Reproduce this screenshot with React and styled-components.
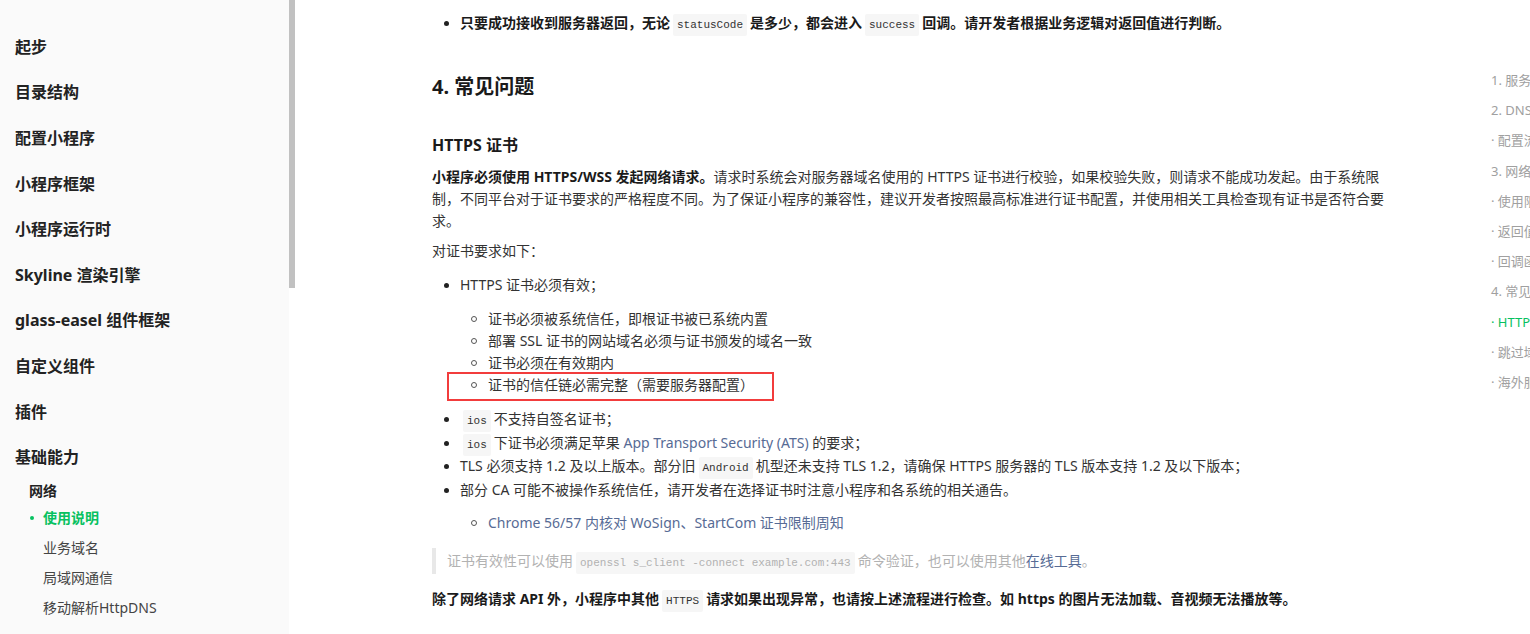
import styled, { createGlobalStyle } from "styled-components";

const GlobalStyle = createGlobalStyle`
    html, body {
        margin: 0;
        padding: 0;
        background: #fff;
        overflow: hidden;
    }
    body {
        font-family: "Noto Sans", "Noto Sans CJK SC", sans-serif;
        color: #333;
        -webkit-font-smoothing: antialiased;
    }
`;

const Page = styled.div`
    display: flex;
    width: 1530px;
    height: 634px;
    overflow: hidden;
`;

/* 左侧目录 */
const Sidebar = styled.nav`
    width: 289px;
    flex-shrink: 0;
    background: #fafafa;
    padding: 24px 0 0 15px;
    box-sizing: border-box;
`;

const ScrollTrack = styled.div`
    width: 6px;
    flex-shrink: 0;
    background: #fff;
`;

const ScrollThumb = styled.div`
    height: 288px;
    background: #c1c1c1;
`;

const NavItem = styled.div`
    font-size: 16px;
    font-weight: 700;
    line-height: 22px;
    padding: 11.8px 0;
    color: #222;
`;

const NavGroup = styled.div`
    font-size: 14px;
    font-weight: 700;
    line-height: 20px;
    margin-top: 1px;
    margin-bottom: 2px;
    padding-left: 14px;
    color: #222;
`;

const NavSub = styled.div`
    position: relative;
    font-size: 14px;
    line-height: 30px;
    padding-left: 28px;
    color: ${(p) => (p.$active ? "#07c160" : "#444")};
    font-weight: ${(p) => (p.$active ? 700 : 400)};

    &::before {
        content: "";
        display: ${(p) => (p.$active ? "block" : "none")};
        position: absolute;
        left: 15px;
        top: 13px;
        width: 4px;
        height: 4px;
        border-radius: 50%;
        background: #07c160;
    }
`;

/* 正文 */
const Main = styled.main`
    flex-shrink: 0;
    padding: 12px 0 0 137px;
`;

const Article = styled.article`
    width: 962px;
    font-size: 14px;
    line-height: 22px;
    color: #333;
`;

const List = styled.ul`
    list-style: none;
    margin: ${(p) => p.$m || "0"};
    padding: 0;
`;

const Item = styled.li`
    position: relative;
    padding-left: 28px;
    margin-top: ${(p) => p.$mt || "0"};
    font-weight: ${(p) => (p.$bold ? 700 : 400)};
    color: ${(p) => (p.$bold ? "#1a1a1a" : "#333")};

    &::before {
        content: "";
        position: absolute;
        left: 12px;
        top: 9px;
        width: 5px;
        height: 5px;
        border-radius: 50%;
        background: #222;
    }
`;

const SubItem = styled.li`
    position: relative;
    padding-left: 28px;

    &::before {
        content: "";
        position: absolute;
        left: 11px;
        top: 8px;
        width: 4px;
        height: 4px;
        border-radius: 50%;
        border: 1.5px solid #555;
    }

    /* 截图里的红色标注框 */
    &::after {
        content: "";
        display: ${(p) => (p.$marked ? "block" : "none")};
        position: absolute;
        left: -13px;
        top: -2px;
        width: 327px;
        height: 29px;
        border: 2px solid #f23c3c;
        box-sizing: border-box;
    }
`;

const Code = styled.code`
    font-family: "Liberation Mono", "DejaVu Sans Mono", monospace;
    font-size: 11px;
    line-height: 14px;
    font-weight: 400;
    background: #f6f6f6;
    padding: 5px 4px;
    margin: 0 3px;
    border-radius: 2px;
    color: ${(p) => (p.$muted ? "#b2b2b2" : "#333")};
`;

const Link = styled.a`
    color: #576b95;
    text-decoration: none;
`;

const H2 = styled.h2`
    margin: 39px 0 0;
    font-size: 20px;
    line-height: 28px;
    font-weight: 700;
    color: #1a1a1a;
`;

const H3 = styled.h3`
    margin: 32px 0 0;
    font-size: 16px;
    line-height: 24px;
    font-weight: 700;
    color: #1a1a1a;
`;

const P = styled.p`
    margin: ${(p) => p.$mt || "0"} 0 0;
    font-weight: ${(p) => (p.$bold ? 700 : 400)};
    color: ${(p) => (p.$bold ? "#1a1a1a" : "#333")};

    strong {
        color: #1a1a1a;
    }
`;

const Quote = styled.blockquote`
    margin: 14px 0 0;
    padding: 2px 0 2px 11px;
    border-left: 4px solid #e8e8e8;
    color: #b2b2b2;
`;

/* 右侧页内导航 */
const Toc = styled.aside`
    flex-shrink: 0;
    margin-left: 97px;
    padding-top: 70px;
    font-size: 13px;
    white-space: nowrap;
`;

const TocItem = styled.div`
    line-height: 20px;
    margin-bottom: 10.2px;
    color: ${(p) => (p.$active ? "#07c160" : "#a0a0a0")};
`;

const navItems = [
    "起步",
    "目录结构",
    "配置小程序",
    "小程序框架",
    "小程序运行时",
    "Skyline 渲染引擎",
    "glass-easel 组件框架",
    "自定义组件",
    "插件",
    "基础能力",
];

const subItems = ["使用说明", "业务域名", "局域网通信", "移动解析HttpDNS"];

const tocItems = [
    "1. 服务器域名配置",
    "2. DNS 预解析域名",
    "· 配置流程",
    "3. 网络请求",
    "· 使用限制",
    "· 返回值",
    "· 回调函数",
    "4. 常见问题",
    "· HTTPS 证书",
    "· 跳过域名校验",
    "· 海外服务器",
];

const certRules = [
    "证书必须被系统信任，即根证书被已系统内置",
    "部署 SSL 证书的网站域名必须与证书颁发的域名一致",
    "证书必须在有效期内",
    "证书的信任链必需完整（需要服务器配置）",
];

const App = () => {
    return (
        <>
            <GlobalStyle />
            <Page>
                <Sidebar>
                    {navItems.map((t) => (
                        <NavItem key={t}>{t}</NavItem>
                    ))}
                    <NavGroup>网络</NavGroup>
                    {subItems.map((t, i) => (
                        <NavSub key={t} $active={i === 0}>
                            {t}
                        </NavSub>
                    ))}
                </Sidebar>
                <ScrollTrack>
                    <ScrollThumb />
                </ScrollTrack>

                <Main>
                    <Article>
                        <List>
                            <Item $bold>
                                只要成功接收到服务器返回，无论<Code>statusCode</Code>是多少，都会进入<Code>success</Code>回调。请开发者根据业务逻辑对返回值进行判断。
                            </Item>
                        </List>

                        <H2>4. 常见问题</H2>
                        <H3>HTTPS 证书</H3>

                        <P $mt="9px">
                            <strong>小程序必须使用 HTTPS/WSS 发起网络请求。</strong>
                            请求时系统会对服务器域名使用的 HTTPS 证书进行校验，如果校验失败，则请求不能成功发起。由于系统限制，不同平台对于证书要求的严格程度不同。为了保证小程序的兼容性，建议开发者按照最高标准进行证书配置，并使用相关工具检查现有证书是否符合要求。
                        </P>
                        <P $mt="8px">对证书要求如下：</P>

                        <List $m="12px 0 0">
                            <Item>
                                HTTPS 证书必须有效；
                                <List $m="12px 0">
                                    {certRules.map((t, i) => (
                                        <SubItem key={t} $marked={i === 3}>
                                            {t}
                                        </SubItem>
                                    ))}
                                </List>
                            </Item>
                            <Item>
                                <Code>ios</Code>不支持自签名证书；
                            </Item>
                            <Item $mt="1.7px">
                                <Code>ios</Code>下证书必须满足苹果 <Link>App Transport Security (ATS)</Link> 的要求；
                            </Item>
                            <Item $mt="1.7px">
                                TLS 必须支持 1.2 及以上版本。部分旧<Code>Android</Code>机型还未支持 TLS 1.2，请确保 HTTPS 服务器的 TLS 版本支持 1.2 及以下版本；
                            </Item>
                            <Item $mt="1.7px">
                                部分 CA 可能不被操作系统信任，请开发者在选择证书时注意小程序和各系统的相关通告。
                                <List $m="11px 0 0">
                                    <SubItem>
                                        <Link>Chrome 56/57 内核对 WoSign、StartCom 证书限制周知</Link>
                                    </SubItem>
                                </List>
                            </Item>
                        </List>

                        <Quote>
                            证书有效性可以使用<Code $muted>openssl s_client -connect example.com:443</Code>命令验证，也可以使用其他<Link>在线工具</Link>。
                        </Quote>

                        <P $mt="14px" $bold>
                            除了网络请求 API 外，小程序中其他<Code>HTTPS</Code>请求如果出现异常，也请按上述流程进行检查。如 https 的图片无法加载、音视频无法播放等。
                        </P>
                    </Article>
                </Main>

                <Toc>
                    {tocItems.map((t) => (
                        <TocItem key={t} $active={t === "· HTTPS 证书"}>
                            {t}
                        </TocItem>
                    ))}
                </Toc>
            </Page>
        </>
    );
};

export default App;
